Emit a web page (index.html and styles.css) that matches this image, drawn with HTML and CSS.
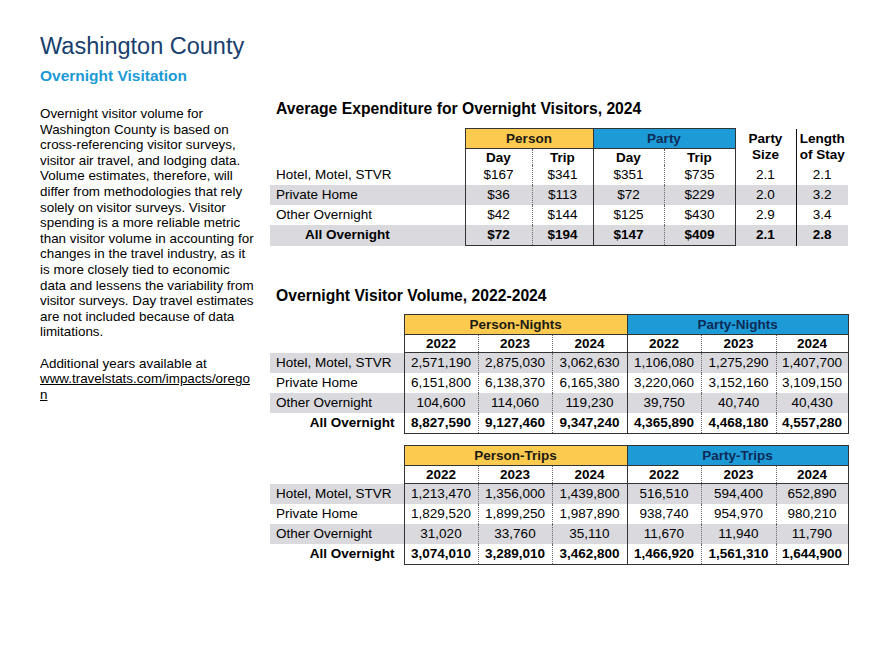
FILE: index.html
```html
<!DOCTYPE html>
<html lang="en">
<head>
<meta charset="utf-8">
<title>Washington County – Overnight Visitation</title>
<link rel="stylesheet" href="styles.css">
</head>
<body>
<div class="page">
  <h1 class="title">Washington County</h1>
  <p class="subtitle">Overnight Visitation</p>
  <div class="main">
    <div class="side">
      <p class="note">Overnight visitor volume for<br>Washington County is based on<br>cross-referencing visitor surveys,<br>visitor air travel, and lodging data.<br>Volume estimates, therefore, will<br>differ from methodologies that rely<br>solely on visitor surveys. Visitor<br>spending is a more reliable metric<br>than visitor volume in accounting for<br>changes in the travel industry, as it<br>is more closely tied to economic<br>data and lessens the variability from<br>visitor surveys. Day travel estimates<br>are not included because of data<br>limitations.</p>
      <p class="note more">Additional years available at<br><a class="link" href="#">www.travelstats.com/impacts/orego<br>n</a></p>
    </div>
    <div class="content">
      <h2 class="sec">Average Expenditure for Overnight Visitors, 2024</h2>
      <table class="tbl t1">
        <colgroup>
          <col class="w195"><col class="w67"><col class="w61"><col class="w71"><col class="w71"><col class="w61"><col class="w52">
        </colgroup>
        <tr class="grp">
          <td class="lab"></td>
          <th colspan="2" class="gold">Person</th>
          <th colspan="2" class="blue">Party</th>
          <th rowspan="2" class="side-h">Party<br>Size</th>
          <th rowspan="2" class="side-h len">Length<br>of Stay</th>
        </tr>
        <tr class="sub">
          <td class="lab"></td>
          <th class="n c1">Day</th><th class="n c3">Trip</th>
          <th class="n c1">Day</th><th class="n c3">Trip</th>
        </tr>
        <tr class="row">
          <td class="lab">Hotel, Motel, STVR</td>
          <td class="n c1">$167</td><td class="n c3">$341</td>
          <td class="n c1">$351</td><td class="n c3">$735</td>
          <td class="x">2.1</td><td class="x len">2.1</td>
        </tr>
        <tr class="row band">
          <td class="lab">Private Home</td>
          <td class="n c1">$36</td><td class="n c3">$113</td>
          <td class="n c1">$72</td><td class="n c3">$229</td>
          <td class="x">2.0</td><td class="x len">3.2</td>
        </tr>
        <tr class="row">
          <td class="lab">Other Overnight</td>
          <td class="n c1">$42</td><td class="n c3">$144</td>
          <td class="n c1">$125</td><td class="n c3">$430</td>
          <td class="x">2.9</td><td class="x len">3.4</td>
        </tr>
        <tr class="row band tot last">
          <td class="lab ind">All Overnight</td>
          <td class="n c1">$72</td><td class="n c3">$194</td>
          <td class="n c1">$147</td><td class="n c3">$409</td>
          <td class="x">2.1</td><td class="x len">2.8</td>
        </tr>
      </table>

      <h2 class="sec sec2">Overnight Visitor Volume, 2022-2024</h2>
      <table class="tbl t2">
        <colgroup>
          <col class="w134"><col class="w74"><col class="w74"><col class="w75"><col class="w74"><col class="w75"><col class="w72">
        </colgroup>
        <tr class="grp">
          <td class="lab"></td>
          <th colspan="3" class="gold">Person-Nights</th>
          <th colspan="3" class="blue">Party-Nights</th>
        </tr>
        <tr class="yrs">
          <td class="lab"></td>
          <th class="n c1">2022</th><th class="n">2023</th><th class="n c3">2024</th>
          <th class="n c1">2022</th><th class="n">2023</th><th class="n c3">2024</th>
        </tr>
        <tr class="row band">
          <td class="lab">Hotel, Motel, STVR</td>
          <td class="n c1">2,571,190</td><td class="n">2,875,030</td><td class="n c3">3,062,630</td>
          <td class="n c1">1,106,080</td><td class="n">1,275,290</td><td class="n c3">1,407,700</td>
        </tr>
        <tr class="row">
          <td class="lab">Private Home</td>
          <td class="n c1">6,151,800</td><td class="n">6,138,370</td><td class="n c3">6,165,380</td>
          <td class="n c1">3,220,060</td><td class="n">3,152,160</td><td class="n c3">3,109,150</td>
        </tr>
        <tr class="row band">
          <td class="lab">Other Overnight</td>
          <td class="n c1">104,600</td><td class="n">114,060</td><td class="n c3">119,230</td>
          <td class="n c1">39,750</td><td class="n">40,740</td><td class="n c3">40,430</td>
        </tr>
        <tr class="row tot last">
          <td class="lab rt">All Overnight</td>
          <td class="n c1">8,827,590</td><td class="n">9,127,460</td><td class="n c3">9,347,240</td>
          <td class="n c1">4,365,890</td><td class="n">4,468,180</td><td class="n c3">4,557,280</td>
        </tr>
      </table>

      <table class="tbl t2 t3">
        <colgroup>
          <col class="w134"><col class="w74"><col class="w74"><col class="w75"><col class="w74"><col class="w75"><col class="w72">
        </colgroup>
        <tr class="grp">
          <td class="lab"></td>
          <th colspan="3" class="gold">Person-Trips</th>
          <th colspan="3" class="blue">Party-Trips</th>
        </tr>
        <tr class="yrs">
          <td class="lab"></td>
          <th class="n c1">2022</th><th class="n">2023</th><th class="n c3">2024</th>
          <th class="n c1">2022</th><th class="n">2023</th><th class="n c3">2024</th>
        </tr>
        <tr class="row band">
          <td class="lab">Hotel, Motel, STVR</td>
          <td class="n c1">1,213,470</td><td class="n">1,356,000</td><td class="n c3">1,439,800</td>
          <td class="n c1">516,510</td><td class="n">594,400</td><td class="n c3">652,890</td>
        </tr>
        <tr class="row">
          <td class="lab">Private Home</td>
          <td class="n c1">1,829,520</td><td class="n">1,899,250</td><td class="n c3">1,987,890</td>
          <td class="n c1">938,740</td><td class="n">954,970</td><td class="n c3">980,210</td>
        </tr>
        <tr class="row band">
          <td class="lab">Other Overnight</td>
          <td class="n c1">31,020</td><td class="n">33,760</td><td class="n c3">35,110</td>
          <td class="n c1">11,670</td><td class="n">11,940</td><td class="n c3">11,790</td>
        </tr>
        <tr class="row tot last">
          <td class="lab rt">All Overnight</td>
          <td class="n c1">3,074,010</td><td class="n">3,289,010</td><td class="n c3">3,462,800</td>
          <td class="n c1">1,466,920</td><td class="n">1,561,310</td><td class="n c3">1,644,900</td>
        </tr>
      </table>
    </div>
  </div>
</div>
</body>
</html>
```

FILE: styles.css
```css
html, body {
  margin: 0;
  padding: 0;
  background: #ffffff;
}

body {
  font-family: "Liberation Sans", Arial, sans-serif;
  color: #000;
}

.page {
  padding: 33px 0 0 40px;
}

.title {
  margin: 0;
  font-size: 23.5px;
  line-height: 27px;
  font-weight: normal;
  color: #18406e;
}

.subtitle {
  margin: 7px 0 0;
  font-size: 15.5px;
  line-height: 18px;
  font-weight: bold;
  color: #1b9ad6;
}

.main {
  display: flex;
  align-items: flex-start;
  margin-top: 15px;
}

.side {
  width: 230px;
  flex: none;
  padding-top: 6px;
}

.note {
  margin: 0;
  font-size: 13.4px;
  line-height: 15.6px;
  white-space: nowrap;
}

.more {
  margin-top: 15.6px;
}

.link {
  color: #000;
  text-decoration: underline;
}

.content {
  width: 578px;
  flex: none;
}

.sec {
  margin: 0 0 10px;
  padding-left: 6px;
  font-size: 15.7px;
  line-height: 18px;
  font-weight: bold;
}

.sec2 {
  margin-top: 41px;
  margin-bottom: 9px;
}

.tbl {
  width: 578px;
  table-layout: fixed;
  border-collapse: collapse;
  font-size: 13.5px;
}

.t3 {
  margin-top: 11px;
}

.w195 { width: 195px; }
.w67 { width: 67px; }
.w61 { width: 61px; }
.w71 { width: 71px; }
.w52 { width: 52px; }
.w134 { width: 134px; }
.w74 { width: 74px; }
.w75 { width: 75px; }
.w72 { width: 72px; }

.tbl td, .tbl th {
  padding: 0;
  text-align: center;
  vertical-align: middle;
  white-space: nowrap;
}

.tbl th {
  font-weight: bold;
}

.tbl .lab {
  text-align: left;
  padding-left: 6px;
}

.tbl .ind {
  padding-left: 35px;
  font-weight: bold;
}

.tbl .rt {
  text-align: right;
  padding-right: 9px;
  font-weight: bold;
}

.grp td, .grp th {
  height: 19px;
  line-height: 16px;
}

.gold, .blue {
  border: 1px solid #333;
}

.gold {
  background: #fbca4f;
  color: #1c1a14;
}

.blue {
  background: #1d9bd7;
  color: #0e2a55;
}

.side-h {
  line-height: 16px;
}

.sub td, .sub th {
  height: 16px;
  line-height: 15px;
}

.yrs td, .yrs th {
  height: 17px;
  line-height: 16px;
}

.yrs .n {
  border-bottom: 1px solid #333;
}

.row td {
  height: 20px;
  line-height: 16px;
}

.band td {
  background: #d9d9de;
}

.tot td {
  font-weight: bold;
}

.n {
  border-left: 1px dotted #6a6a6a;
  border-right: 1px dotted #6a6a6a;
}

.n.c1 {
  border-left: 1px solid #333;
}

.n.c3 {
  border-right: 1px solid #333;
}

.last .n {
  border-bottom: 1px solid #333;
}

.len {
  border-left: 1px solid #111;
}
```
